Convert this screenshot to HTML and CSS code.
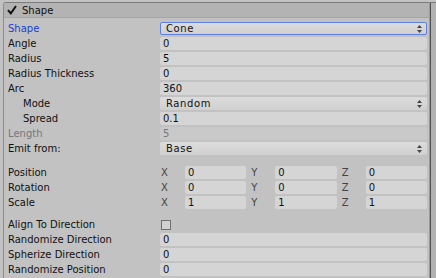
FILE: index.html
```html
<!DOCTYPE html>
<html lang="en">
<head>
    <meta charset="UTF-8" />
    <title>Shape Module</title>
    <link rel="stylesheet" href="styles.css">
</head>
<body>

<div class="inspector">
    <div class="module">
        <div class="module-header">
            <svg class="check" width="10" height="10" viewBox="0 0 10 10">
                <path d="M1 5.2 L3.8 8.4 L9 1" fill="none" stroke="#111" stroke-width="2" />
            </svg>
            <span>Shape</span>
        </div>

        <div class="module-body">
            <div class="row">
                <label class="label active">Shape</label>
                <div class="field dropdown focused">Cone
                    <svg class="arrows" width="5" height="8" viewBox="0 0 5 8"><path d="M0 3 L2.5 0 L5 3 Z M0 5 L2.5 8 L5 5 Z" fill="#444" /></svg>
                </div>
            </div>
            <div class="row"><label class="label">Angle</label><div class="field">0</div></div>
            <div class="row"><label class="label">Radius</label><div class="field">5</div></div>
            <div class="row"><label class="label">Radius Thickness</label><div class="field">0</div></div>
            <div class="row"><label class="label">Arc</label><div class="field">360</div></div>
            <div class="row">
                <label class="label indent">Mode</label>
                <div class="field dropdown">Random
                    <svg class="arrows" width="5" height="8" viewBox="0 0 5 8"><path d="M0 3 L2.5 0 L5 3 Z M0 5 L2.5 8 L5 5 Z" fill="#444" /></svg>
                </div>
            </div>
            <div class="row"><label class="label indent">Spread</label><div class="field">0.1</div></div>
            <div class="row disabled"><label class="label">Length</label><div class="field">5</div></div>
            <div class="row">
                <label class="label">Emit from:</label>
                <div class="field dropdown">Base
                    <svg class="arrows" width="5" height="8" viewBox="0 0 5 8"><path d="M0 3 L2.5 0 L5 3 Z M0 5 L2.5 8 L5 5 Z" fill="#444" /></svg>
                </div>
            </div>

            <div class="spacer big"></div>

            <div class="row">
                <label class="label">Position</label>
                <div class="vector">
                    <div class="axis"><span>X</span><div class="field">0</div></div>
                    <div class="axis"><span>Y</span><div class="field">0</div></div>
                    <div class="axis"><span>Z</span><div class="field">0</div></div>
                </div>
            </div>
            <div class="row">
                <label class="label">Rotation</label>
                <div class="vector">
                    <div class="axis"><span>X</span><div class="field">0</div></div>
                    <div class="axis"><span>Y</span><div class="field">0</div></div>
                    <div class="axis"><span>Z</span><div class="field">0</div></div>
                </div>
            </div>
            <div class="row">
                <label class="label">Scale</label>
                <div class="vector">
                    <div class="axis"><span>X</span><div class="field">1</div></div>
                    <div class="axis"><span>Y</span><div class="field">1</div></div>
                    <div class="axis"><span>Z</span><div class="field">1</div></div>
                </div>
            </div>

            <div class="spacer"></div>

            <div class="row">
                <label class="label">Align To Direction</label>
                <div class="toggle"><span class="checkbox"></span></div>
            </div>
            <div class="row"><label class="label">Randomize Direction</label><div class="field">0</div></div>
            <div class="row"><label class="label">Spherize Direction</label><div class="field">0</div></div>
            <div class="row"><label class="label">Randomize Position</label><div class="field">0</div></div>
        </div>
    </div>
    <div class="scroll-edge"></div>
</div>

</body>
</html>
```

FILE: styles.css
```css
body {
    margin: 0;
    background: #c2c2c2;
    font-family: "DejaVu Sans", Verdana, sans-serif;
    font-size: 10px;
    color: #111;
    height: 278px;
    overflow: hidden;
}

.inspector {
    display: flex;
    padding-left: 3px;
    padding-top: 2px;
    height: 300px;
}

.module {
    width: 425px;
    border-left: 1px solid #8c8c8c;
    border-top: 1px solid #7c7c7c;
    border-right: 1px solid #9a9a9a;
    border-top-left-radius: 3px;
}

.scroll-edge {
    flex: 1;
    border-left: 1px solid #505050;
    border-top: 1px solid #7c7c7c;
    background: #b2b2b2;
}

.module-header {
    display: flex;
    align-items: center;
    gap: 5px;
    height: 14px;
    padding-left: 3px;
    background: #b3b3b3;
    border-bottom: 1px solid #a6a6a6;
    border-top-left-radius: 3px;
}

.check {
    display: block;
}

.module-body {
    padding: 4px 2px 0 4px;
}

.row {
    display: grid;
    grid-template-columns: 152px 1fr;
    align-items: center;
    height: 13px;
    margin-bottom: 2px;
}

.label {
    white-space: nowrap;
    line-height: 13px;
}

.label.indent {
    padding-left: 15px;
}

.label.active {
    color: #1a3fd8;
}

.field {
    position: relative;
    height: 13px;
    line-height: 13px;
    padding-left: 3px;
    background: #d5d5d5;
    border-radius: 2px;
    white-space: nowrap;
}

.dropdown {
    padding-left: 6px;
    letter-spacing: 0.6px;
    background: linear-gradient(#dcdcdc, #d0d0d0);
    box-sizing: border-box;
}

.dropdown.focused {
    border: 1px solid #5d7fe6;
    line-height: 11px;
    padding-left: 5px;
}

.arrows {
    position: absolute;
    right: 5px;
    top: 2.5px;
}

.focused .arrows {
    right: 4px;
    top: 1.5px;
}

.disabled {
    color: #777;
}

.disabled .field {
    background: #c9c9c9;
}

.vector {
    display: grid;
    grid-template-columns: repeat(3, 1fr);
    column-gap: 4px;
}

.axis {
    display: grid;
    grid-template-columns: 25px 1fr;
    align-items: center;
}

.axis span {
    color: #444;
    padding-left: 1px;
}

.spacer {
    height: 7px;
}

.spacer.big {
    height: 9px;
}

.toggle {
    display: flex;
    align-items: center;
    padding-left: 1px;
}

.checkbox {
    width: 8px;
    height: 8px;
    border: 1px solid #707070;
    background: #d2d2d2;
}
```
